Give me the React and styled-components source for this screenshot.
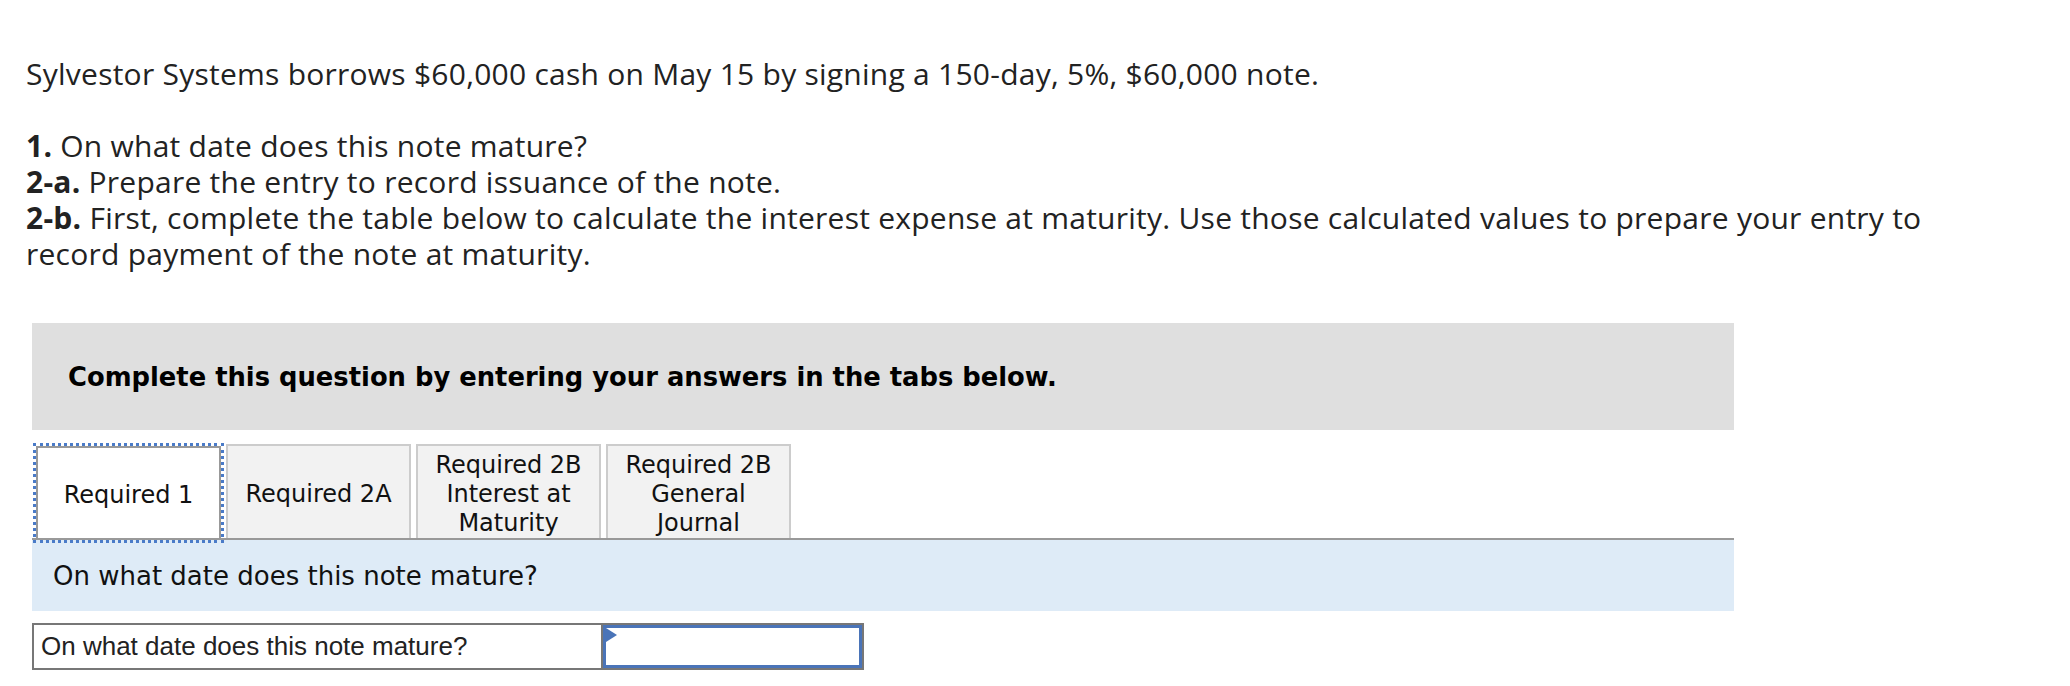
import styled, { createGlobalStyle } from "styled-components";

const GlobalStyle = createGlobalStyle`
  body {
    margin: 0;
    background: #ffffff;
  }
`;

const Page = styled.div`
  padding: 56px 0 16px 26px;
  color: #222222;
`;

const Prompt = styled.div`
  width: 1915px;
  font-family: "Open Sans", "Lato", sans-serif;
  font-size: 30px;
  line-height: 36px;
  letter-spacing: 0.25px;
  color: #222222;
`;

const Intro = styled.p`
  margin: 0 0 36px;
`;

const Parts = styled.p`
  margin: 0;
`;

const Question = styled.div`
  margin: 51px 0 0 6px;
  width: 1702px;
`;

const Banner = styled.div`
  height: 107px;
  box-sizing: border-box;
  padding: 0 36px;
  display: flex;
  align-items: center;
  background: #dfdfdf;
  font-family: "DejaVu Sans", Verdana, sans-serif;
  font-weight: bold;
  font-size: 25.8px;
  color: #000000;
`;

const TabList = styled.div`
  margin-top: 14px;
  padding-left: 4px;
  display: flex;
  align-items: flex-end;
  gap: 5px;
  border-bottom: 2px solid #999999;
`;

const Tab = styled.button`
  width: 185px;
  height: 94px;
  box-sizing: border-box;
  padding: 5px 6px 0;
  display: flex;
  align-items: center;
  justify-content: center;
  text-align: center;
  font-family: "DejaVu Sans", Verdana, sans-serif;
  font-size: 24px;
  line-height: 29px;
  color: #111111;
  background: ${(p) => (p.$active ? "#ffffff" : "#f2f2f2")};
  border: 2px solid ${(p) => (p.$active ? "#999999" : "#cccccc")};
  border-bottom: ${(p) => (p.$active ? "2px solid #999999" : "none")};
  outline: ${(p) => (p.$active ? "3px dotted #4a7bc8" : "none")};
  margin-bottom: ${(p) => (p.$active ? "-2px" : "0")};
  cursor: pointer;
`;

const Panel = styled.div`
  height: 71px;
  box-sizing: border-box;
  padding-left: 21px;
  display: flex;
  align-items: center;
  background: #deebf7;
  font-family: "DejaVu Sans", Verdana, sans-serif;
  font-size: 26px;
  color: #111111;
`;

const AnswerTable = styled.div`
  margin-top: 12px;
  width: 832px;
  height: 47px;
  box-sizing: border-box;
  display: flex;
  border: 2px solid #777777;
`;

const Label = styled.div`
  width: 569px;
  box-sizing: border-box;
  padding-left: 7px;
  display: flex;
  align-items: center;
  border-right: 2px solid #777777;
  font-family: "Liberation Sans", Arial, sans-serif;
  font-size: 26px;
  color: #222222;
`;

const InputCell = styled.div`
  flex: 1;
  position: relative;
  box-sizing: border-box;
  border: 3px solid #4a74b8;
`;

const Marker = styled.span`
  position: absolute;
  top: 0;
  left: 0;
  width: 0;
  height: 0;
  border-top: 7px solid transparent;
  border-bottom: 7px solid transparent;
  border-left: 11px solid #4a74b8;
`;

const tabs = [
  ["Required 1"],
  ["Required 2A"],
  ["Required 2B", "Interest at", "Maturity"],
  ["Required 2B", "General", "Journal"],
];

function App() {
  return (
    <Page>
      <GlobalStyle />
      <Prompt>
        <Intro>
          Sylvestor Systems borrows $60,000 cash on May 15 by signing a
          150-day, 5%, $60,000 note.
        </Intro>
        <Parts>
          <strong>1.</strong> On what date does this note mature?
          <br />
          <strong>2-a.</strong> Prepare the entry to record issuance of the
          note.
          <br />
          <strong>2-b.</strong> First, complete the table below to calculate
          the interest expense at maturity. Use those calculated values to
          prepare your entry to record payment of the note at maturity.
        </Parts>
      </Prompt>
      <Question>
        <Banner>Complete this question by entering your answers in the tabs below.</Banner>
        <TabList>
          {tabs.map((lines, i) => (
            <Tab key={i} $active={i === 0}>
              <span>
                {lines.map((l, j) => (
                  <span key={j}>
                    {l}
                    {j < lines.length - 1 && <br />}
                  </span>
                ))}
              </span>
            </Tab>
          ))}
        </TabList>
        <Panel>On what date does this note mature?</Panel>
        <AnswerTable>
          <Label>On what date does this note mature?</Label>
          <InputCell>
            <Marker />
          </InputCell>
        </AnswerTable>
      </Question>
    </Page>
  );
}

export default App;
